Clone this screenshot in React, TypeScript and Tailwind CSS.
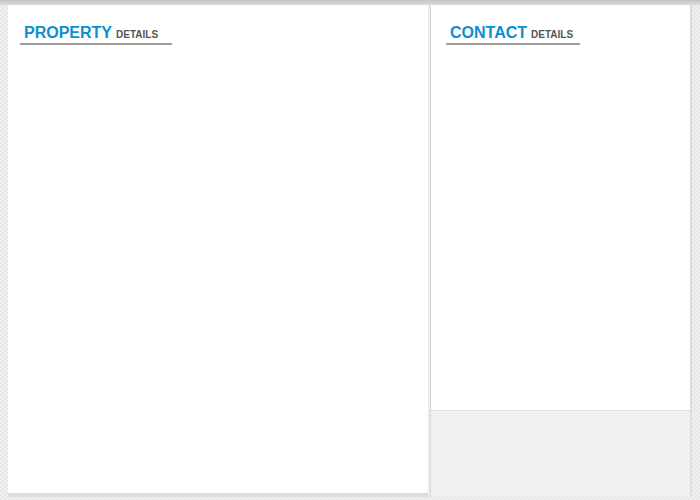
export default function App() {
  return (
    <div
      className="w-[700px] h-[500px] flex flex-col overflow-hidden bg-[#ebebeb] bg-[repeating-conic-gradient(#e6e6e6_0%_25%,#f0f0f0_0%_50%)] bg-[length:4px_4px]"
      style={{ fontFamily: '"Liberation Sans", Arial, sans-serif' }}
    >
      {/* top strip */}
      <div className="h-[5px] shrink-0 bg-gradient-to-b from-[#c4c4c4] to-[#dcdcdc]" />

      <div className="flex flex-1 min-h-0">
        {/* Property panel */}
        <div className="ml-[8px] w-[420px] flex flex-col">
          <section className="flex-1 bg-white pt-[20px] pl-[12px]">
            <SectionTitle main="PROPERTY" sub="DETAILS" width="w-[152px]" />
          </section>
          <div className="h-[4px] bg-[#dcdcdc]" />
          <div className="h-[3px]" />
        </div>

        {/* Contact panel */}
        <div className="ml-[2px] w-[262px] flex flex-col">
          <section className="flex-1 flex flex-col border-l border-l-[#d8d8d8] border-r-2 border-r-[#dedede] bg-white">
            <div className="flex-1 pt-[20px] pl-[15px]">
              <SectionTitle main="CONTACT" sub="DETAILS" width="w-[134px]" />
            </div>
            <div className="h-[87px] bg-[#f0f0f0] border-t border-t-[#e2e2e2]" />
          </section>
          <div className="h-[3px]" />
        </div>
      </div>
    </div>
  );
}

function SectionTitle({ main, sub, width }: { main: string; sub: string; width: string }) {
  return (
    <div className={`${width} flex items-baseline gap-[4px] border-b-2 border-b-[#a0a0a0] pl-[4px] leading-[16px]`}>
      <span className="text-[16px] font-bold text-[#0b8fd0] leading-[16px]">{main}</span>
      <span className="text-[10px] font-bold text-[#555555] leading-[16px]">{sub}</span>
    </div>
  );
}
